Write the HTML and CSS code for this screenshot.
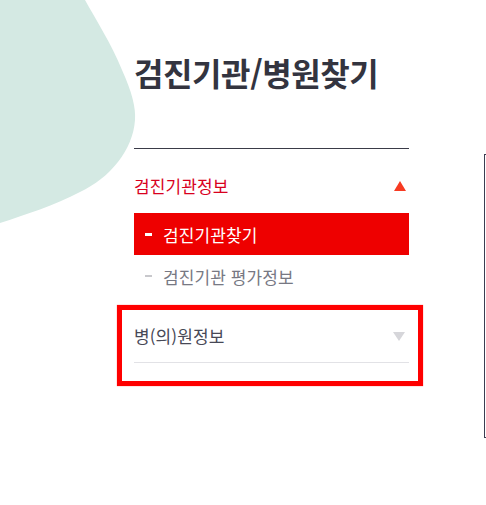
FILE: index.html
```html
<!DOCTYPE html>
<html lang="ko">
<head>
<meta charset="utf-8">
<title>검진기관/병원찾기</title>
<link rel="stylesheet" href="styles.css">
</head>
<body>
<svg class="blob" width="140" height="230" viewBox="0 0 140 230" aria-hidden="true">
  <path d="M0 0 H85 C95 18 112 45 122 70 C132 92 136 108 135 120 C133 150 110 178 80 192 C55 205 25 215 0 223 Z" fill="#d4e9e3"/>
</svg>
<div class="page">
  <aside class="sidebar">
    <h1 class="title">검진기관/병원찾기</h1>
    <nav class="menu">
      <div class="menu-head active">
        <span>검진기관정보</span>
        <span class="tri tri-up"></span>
      </div>
      <ul class="sub">
        <li class="sub-item current"><span class="dash"></span>검진기관찾기</li>
        <li class="sub-item"><span class="dash"></span>검진기관 평가정보</li>
      </ul>
      <div class="menu-head closed highlight">
        <span>병(의)원정보</span>
        <span class="tri tri-down"></span>
      </div>
    </nav>
  </aside>
  <main class="content"></main>
</div>
</body>
</html>
```

FILE: styles.css
```css
html, body {
  margin: 0;
  padding: 0;
  overflow: hidden;
  background: #fff;
  font-family: "Noto Sans CJK KR", "Noto Sans", sans-serif;
}

.blob {
  position: absolute;
  left: 0;
  top: 0;
  z-index: 0;
}

.page {
  position: relative;
  z-index: 1;
  display: flex;
  align-items: flex-start;
  gap: 75px;
  padding-left: 134px;
}

.sidebar {
  width: 275px;
  flex-shrink: 0;
}

.title {
  margin: 52px 0 0;
  padding-bottom: 56px;
  font-size: 32px;
  line-height: 40px;
  font-weight: 700;
  letter-spacing: -0.4px;
  color: #33343f;
  border-bottom: 1px solid #3a3b48;
}

.menu {
  margin: 0;
}

.menu-head {
  display: flex;
  justify-content: space-between;
  align-items: center;
  font-size: 17px;
  line-height: 24px;
  letter-spacing: 0.1px;
}

.menu-head.active {
  color: #d8001e;
  padding: 25px 3px 15px 0;
}

.menu-head.closed {
  color: #474856;
  padding: 27px 4px 14px 0;
  border-bottom: 1px solid #e2e2e6;
}

.highlight {
  position: relative;
}

.highlight::after {
  content: "";
  position: absolute;
  top: 8px;
  left: -17px;
  right: -14px;
  bottom: -24px;
  border: 5px solid #ff0000;
  box-shadow: 0 0 1px rgba(255, 0, 0, 0.6);
}

.tri {
  width: 0;
  height: 0;
  border-left: 6px solid transparent;
  border-right: 6px solid transparent;
}

.tri-up {
  border-bottom: 10px solid #f73a22;
}

.tri-down {
  border-top: 9px solid #d6d6da;
}

.sub {
  list-style: none;
  margin: 0;
  padding: 0;
}

.sub-item {
  display: flex;
  align-items: center;
  height: 42px;
  padding-left: 11px;
  font-size: 17px;
  letter-spacing: 0.1px;
  color: #777883;
}

.sub-item .dash {
  display: inline-block;
  width: 7px;
  height: 2px;
  background: #c8c8cc;
  margin-right: 11px;
}

.sub-item.current {
  background: #ee0000;
  color: #fff;
}

.sub-item.current .dash {
  background: #fff;
  height: 3px;
}

.content {
  flex: 1;
  min-width: 0;
  height: 282px;
  margin-top: 154px;
  border: 1px solid #3b3d52;
  border-right: none;
}
```
